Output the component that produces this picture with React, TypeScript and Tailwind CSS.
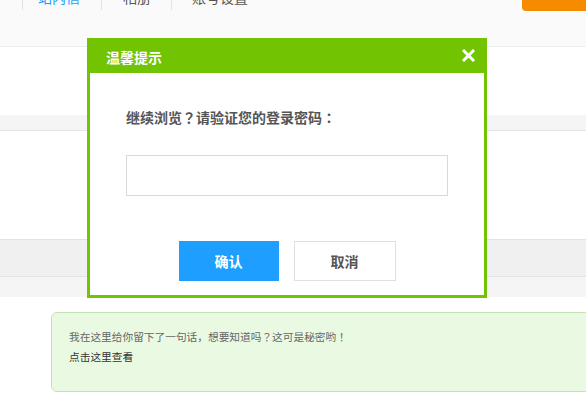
import React from 'react';

const font = { fontFamily: '"Noto Sans CJK SC", "Noto Sans", sans-serif' };

// centred full-width punctuation, as the reference font draws it
const P: React.FC<{ c: string }> = ({ c }) => (
  <span style={{ fontFamily: '"Noto Sans CJK TC", sans-serif' }}>{c}</span>
);

const App: React.FC = () => {
  return (
    <div className="relative w-[586px] h-[393px] overflow-hidden bg-white" style={font}>
      {/* top nav */}
      <div className="h-[47px] bg-[#fafafa] border-b border-[#eeeeee] flex items-start">
        <div className="ml-[22px] w-px h-[10px] bg-[#e3e3e3]"></div>
        <span className="ml-[15px] -mt-[13px] text-[14px] leading-[20px] text-[#1e9fff]">站内信</span>
        <div className="ml-[21px] w-px h-[10px] bg-[#e3e3e3]"></div>
        <span className="ml-[21px] -mt-[13px] text-[14px] leading-[20px] text-[#555]">相册</span>
        <div className="ml-[20px] w-px h-[10px] bg-[#e3e3e3]"></div>
        <span className="ml-[20px] -mt-[13px] text-[14px] leading-[20px] text-[#555]">账号设置</span>
        <div className="ml-auto w-[64px] h-[11px] bg-[#f78b00] rounded-bl-[4px]"></div>
      </div>

      <div className="h-[68px]"></div>
      <div className="h-[16px] bg-[#f5f5f5] border-b border-[#e6e6e6]"></div>
      <div className="h-[108px]"></div>
      <div className="h-[38px] bg-[#f0f0f0] border-y border-[#e3e3e3]"></div>
      <div className="h-[20px] bg-[#f5f5f5]"></div>

      {/* tip box */}
      <div className="mt-[15px] ml-[51px] w-[600px] h-[80px] bg-[#eafae2] border border-[#c4e3b3] rounded-[6px] pl-[17px] pt-[14px] text-[10.7px] leading-[20px]">
        <div className="text-[#666]">
          我在这里给你留下了一句话，想要知道吗<P c="？" />这可是秘密哟<P c="！" />
        </div>
        <div className="text-[#333]">点击这里查看</div>
      </div>

      {/* modal */}
      <div className="absolute left-[87px] top-[38px] w-[400px] h-[260px] border-[3px] border-[#72c302] bg-white">
        <div className="h-[32px] bg-[#72c302] flex items-center justify-between pl-[16px] pr-[9px]">
          <span className="text-[14px] font-bold text-white leading-[20px]">温馨提示</span>
          <svg width="13" height="13" viewBox="0 0 13 13" className="-mt-[3px]">
            <path d="M2 2 L11 11 M11 2 L2 11" stroke="#ffffff" strokeWidth="3" strokeLinecap="square" />
          </svg>
        </div>
        <div className="px-[36px]">
          <div className="mt-[34px] text-[14px] leading-[20px] font-bold text-[#555]">
            继续浏览<P c="？" />请验证您的登录密码<P c="：" />
          </div>
          <input type="password" className="mt-[28px] block w-full h-[41px] border border-[#d9d9d9] outline-none px-2" />
          <div className="mt-[45px] flex justify-center gap-[15px]">
            <button className="w-[100px] h-[40px] bg-[#1e9fff] text-white text-[14px] font-bold">确认</button>
            <button className="w-[102px] h-[40px] bg-white border border-[#e0e0e0] text-[#555] text-[14px] font-bold">取消</button>
          </div>
        </div>
      </div>
    </div>
  );
};

export default App;
